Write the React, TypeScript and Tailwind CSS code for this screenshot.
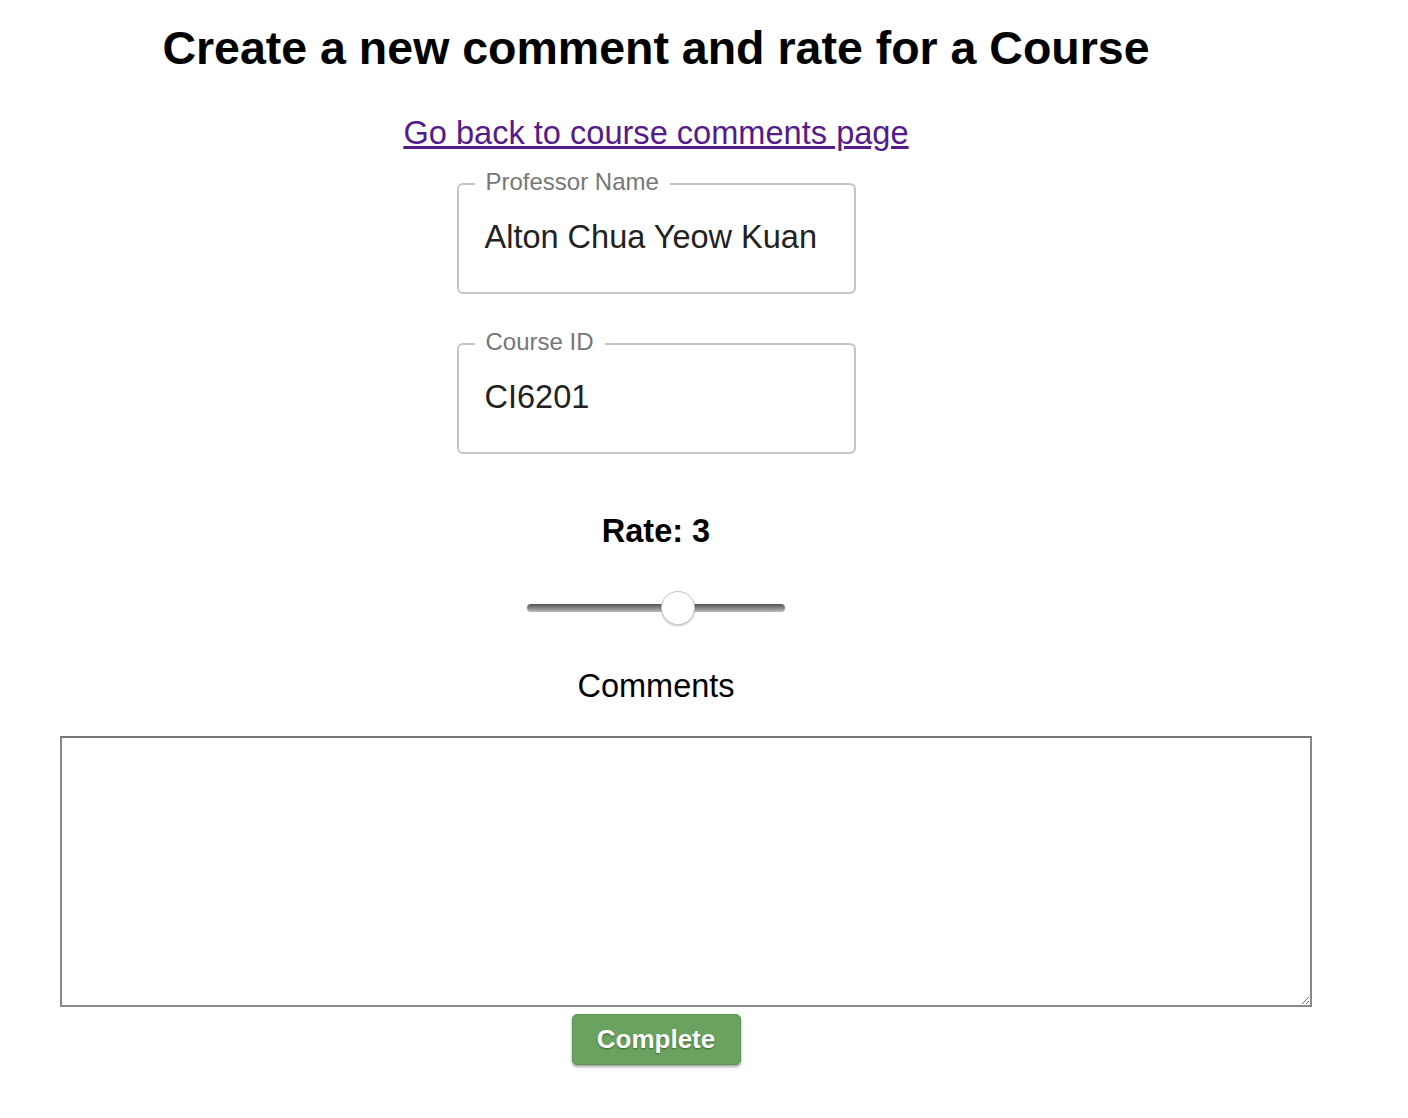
import React from "react";

const Field = ({ label, value }: { label: string; value: string }) => {
  return (
    <div className="relative w-[399px] h-[111px] border-2 border-[#c4c4c4] rounded-[6px] px-[26px]">
      <span className="absolute left-[16px] top-[-16px] px-[11px] bg-white text-[24px] leading-[26px] text-[#777]">
        {label}
      </span>
      <div className="pt-[33px] text-[32.5px] leading-[38px] text-[#222]">{value}</div>
    </div>
  );
};

const App = () => {
  return (
    <div className="w-[1312px] flex flex-col items-center bg-white pb-[40px] font-['Liberation_Sans',Arial,sans-serif] text-black">
      <h1 className="mt-[21px] text-[46.5px] leading-[54px] font-bold">
        Create a new comment and rate for a Course
      </h1>
      <a href="#" className="mt-[39px] text-[32.6px] leading-[38px] text-[#551a8b] underline">
        Go back to course comments page
      </a>
      <div className="mt-[31px] flex flex-col gap-[49px]">
        <Field label="Professor Name" value="Alton Chua Yeow Kuan" />
        <Field label="Course ID" value="CI6201" />
      </div>
      <p className="mt-[58px] text-[32.5px] leading-[38px] font-bold">Rate: 3</p>
      {/* slider */}
      <div className="mt-[41px] relative w-[258px] h-[34px] flex items-center">
        <div className="w-full h-[8px] rounded-full bg-gradient-to-b from-[#555] to-[#bbb]" />
        <div className="absolute left-[134px] top-0 w-[34px] h-[34px] rounded-full bg-white border border-[#c8c8c8] shadow-[0_1px_2px_rgba(0,0,0,0.25)]" />
      </div>
      <p className="mt-[42px] text-[32.5px] leading-[38px]">Comments</p>
      <div className="w-full mt-[31px] pl-[60px]">
        <textarea className="block w-[1252px] h-[271px] border-2 border-[#888] border-t-[#767676] bg-white resize" />
      </div>
      <button className="mt-[7px] w-[169px] h-[51px] rounded-[5px] bg-[#6aa35f] text-white text-[26px] font-bold [text-shadow:0_1px_2px_rgba(0,0,0,0.45)] shadow-[0_2px_3px_rgba(0,0,0,0.35)] border border-[#5c9452]">
        Complete
      </button>
    </div>
  );
};

export default App;
